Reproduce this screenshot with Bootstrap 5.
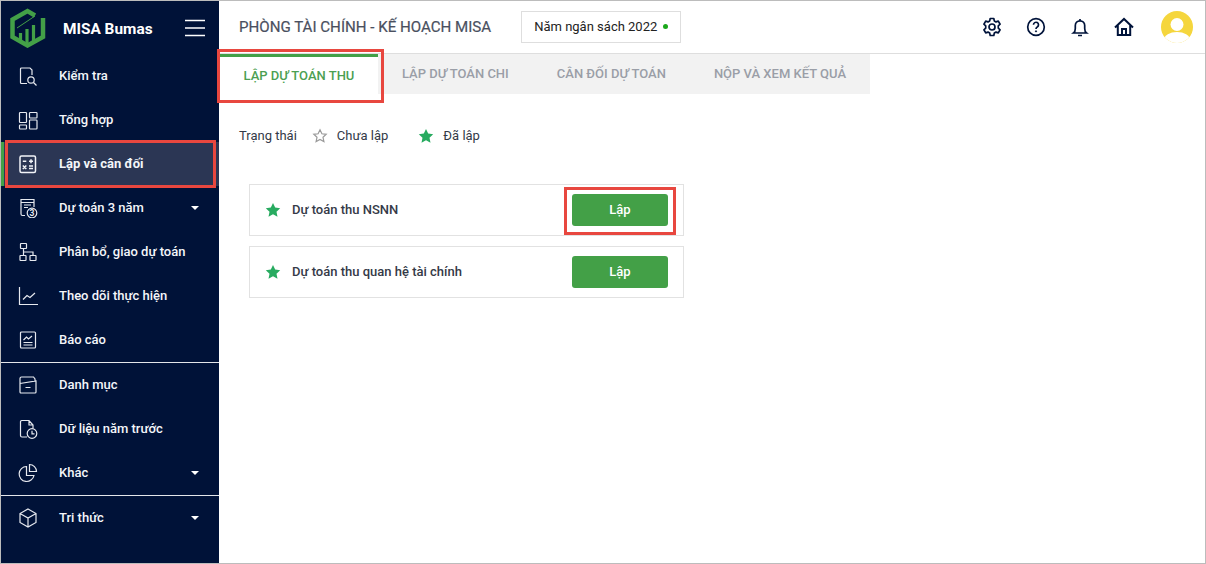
<!DOCTYPE html>
<html lang="vi"><head><meta charset="utf-8"><title>MISA Bumas</title>
<link href="https://cdn.jsdelivr.net/npm/bootstrap@5.3.0/dist/css/bootstrap.min.css" rel="stylesheet">
<style>
html,body{height:100%;margin:0;overflow:hidden}
body{font-family:Roboto,"Liberation Sans",sans-serif;font-size:13px;color:#212b3d;background:#fff}
.app-frame{width:1206px;height:564px;border:1px solid #bcbcbc;position:relative;display:flex;overflow:hidden}
.side-bar{width:218px;flex:none;background:#001238;color:#fff}
.brand-row{height:53px;padding-left:9px;padding-right:14px}
.brand-name{font-weight:700;font-size:15.400px;margin-left:17px;margin-top:5px}
.menu-row{height:44px;padding-left:17px;padding-right:20px;font-size:13px;font-weight:500;color:#f4f6fa}
.menu-row svg.mi{width:20px;height:20px;flex:none;margin-right:21px;fill:none;stroke:#e6e9ef;stroke-width:1.200}
.menu-row.is-on svg.mi{stroke:#f2f4f8;stroke-width:1.500}
.menu-row.is-on{background:#2b3654;border-left:3px solid #43a047;padding-left:14px;font-weight:700}
.menu-sep{height:1px;background:#e4e6ea;margin:0}
.down-caret{margin-left:auto;width:0;height:0;border-left:4.500px solid transparent;border-right:4.500px solid transparent;border-top:4.500px solid #fff}
.main-pane{flex:1;min-width:0}
.top-bar{height:53px;border-bottom:1px solid #dedede;padding-left:20px}
.org-title{font-size:15.100px;color:#4a5060;font-weight:400;-webkit-text-stroke:.2px #4a5060}
.year-box{border:1px solid #dedede;height:32px;width:160px;margin-left:30px;padding-left:12px;font-size:13px;color:#222;margin-top:-1px}
.year-dot{width:5px;height:5px;border-radius:50%;background:#1ba81b;margin-left:6px}
.top-icons{margin-left:auto;padding-right:12px}
.top-icons svg{display:block}
.top-icons .ti{width:22px;height:22px;fill:none;stroke:#00133a;stroke-width:1.700;margin-right:22px}
.top-icons .ti.last-ti{margin-right:26px}
.tab-strip{height:40px;width:651px;background:#f2f2f2}
.tab-item{height:40px;font-size:13px;font-weight:500;color:#9a9ea7;padding:0 24px;white-space:nowrap}
.tab-item.is-on{background:#fff;border-top:3px solid #43a047;color:#4c9f52;width:158px;padding:0;justify-content:center;margin-left:1px}
.status-row{padding:32px 0 0 20px;font-size:13px;height:66px;color:#333a48}
.star{width:16px;height:16px;flex:none}
.status-row .star{margin-top:2px}
.task-box{width:435px;height:52px;border:1px solid #e2e2e2;margin-left:30px;margin-bottom:10px;padding-left:15px;padding-right:15px;font-size:13px;font-weight:500;color:#353a47}
.task-box .star{margin-right:11px}
.lap-btn{width:96px;height:32px;background:#43a047;color:#fff;border:0;border-radius:3px;font-size:13px;font-weight:500;margin-left:auto;padding:0}
.mark-box{position:absolute;border:3px solid #e8473f;pointer-events:none}
</style></head><body>
<div class="app-frame">
<nav class="side-bar d-flex flex-column">
  <div class="brand-row d-flex align-items-center">
    <svg width="36" height="40" viewBox="0 0 36 40" fill="none"><path d="M25 7.500 17.500 3 2.500 11.500V29L17.500 37.500 33 29V10" stroke="#43a047" stroke-width="4.500"/><path d="M10.500 25V33.500M17 21V36M23.500 17V33.500" stroke="#43a047" stroke-width="3.200"/><path d="M7 20 16 14 25 8" stroke="#43a047" stroke-width="1"/></svg>
    <span class="brand-name">MISA Bumas</span>
    <svg class="ms-auto" width="20" height="18" viewBox="0 0 20 18" stroke="#fff" stroke-width="1.600"><path d="M0 1.500H20M0 9H20M0 16.500H20"/></svg>
  </div>
  <div class="menu-row d-flex align-items-center"><svg class="mi" viewBox="0 0 20 20"><path d="M9 17.500H3.500a1 1 0 0 1-1-1V3a1 1 0 0 1 1-1H12l2 2v5"/><circle cx="13" cy="14" r="3.200"/><path d="m15.500 16.500 3 3"/></svg>Kiểm tra</div>
  <div class="menu-row d-flex align-items-center"><svg class="mi" viewBox="0 0 20 20"><rect x="1.500" y="2.500" width="7" height="10" rx=".7"/><rect x="11.500" y="2.500" width="7.500" height="5.500" rx=".7"/><rect x="1.500" y="15" width="7" height="4" rx=".7"/><rect x="11.500" y="10" width="7.500" height="9" rx=".7"/></svg>Tổng hợp</div>
  <div class="menu-row is-on d-flex align-items-center"><svg class="mi" viewBox="0 0 20 20"><rect x="2" y="2" width="15.500" height="16.500" rx="1.500"/><path d="M4.800 7.200h3.500M11 7.200h4M13 5.200v4M4.800 11.500l3.500 3.500M8.300 11.500l-3.500 3.500M11 12h4M11 14.500h4"/></svg>Lập và cân đối</div>
  <div class="menu-row d-flex align-items-center"><svg class="mi" viewBox="0 0 20 20"><path d="M7 17.500H4.500A1.500 1.500 0 0 1 3 16V1.500h13V9"/><path d="M3 4.500h13M6 7h7M6 9.500h4"/><circle cx="14" cy="15" r="4.800"/><text x="14" y="18" text-anchor="middle" font-size="8.500" font-weight="700" fill="#e6e9ef" stroke="none" font-family="Roboto,sans-serif">3</text></svg>Dự toán 3 năm<span class="down-caret"></span></div>
  <div class="menu-row d-flex align-items-center"><svg class="mi" viewBox="0 0 20 20"><rect x="2.500" y="1.500" width="6" height="5" rx=".5"/><rect x="2" y="13.500" width="6" height="5" rx=".5"/><rect x="12" y="13.500" width="6" height="5" rx=".5"/><path d="M5.500 6.500v7M5.500 10H15v3.500"/></svg>Phân bổ, giao dự toán</div>
  <div class="menu-row d-flex align-items-center"><svg class="mi" viewBox="0 0 20 20"><path d="M1.500 1v17.500H20"/><path d="m5 13.500 4-4 3 2 5-4.500"/></svg>Theo dõi thực hiện</div>
  <div class="menu-row d-flex align-items-center"><svg class="mi" viewBox="0 0 20 20"><rect x="2.500" y="2" width="15" height="16" rx="1"/><path d="m5.500 10 3-3 2 2 3.500-3M5.500 12.500h9M5.500 15h9"/></svg>Báo cáo</div>
  <div class="menu-sep"></div>
  <div class="menu-row d-flex align-items-center"><svg class="mi" viewBox="0 0 20 20"><path d="M2 17V3.500A1.500 1.500 0 0 1 3.500 2h12L17 4v2M2 8.500 18 6v11a1 1 0 0 1-1 1H3a1 1 0 0 1-1-1ZM7.500 12.500h5"/></svg>Danh mục</div>
  <div class="menu-row d-flex align-items-center"><svg class="mi" viewBox="0 0 20 20"><path d="M9 18H4a1.500 1.500 0 0 1-1.500-1.500v-14A1.500 1.500 0 0 1 4 1.500h7l4 4.500v3.500M11 1.500V6h4"/><circle cx="14" cy="14.500" r="4.800"/><path d="M14 11.800v3h2.500"/></svg>Dữ liệu năm trước</div>
  <div class="menu-row d-flex align-items-center"><svg class="mi" viewBox="0 0 20 20"><path d="M8.500 3.500a7.500 7.500 0 1 0 7.500 9H8.500Z"/><path d="M11.500 1.500a7 7 0 0 1 7 7h-7Z"/></svg>Khác<span class="down-caret"></span></div>
  <div class="menu-sep"></div>
  <div class="menu-row d-flex align-items-center"><svg class="mi" viewBox="0 0 20 20"><path d="m10 1 8 4.500v9L10 19l-8-4.500v-9ZM2 5.500 10 10l8-4.500M10 10v9"/></svg>Tri thức<span class="down-caret"></span></div>
</nav>
<main class="main-pane d-flex flex-column">
  <header class="top-bar d-flex align-items-center">
    <span class="org-title">PHÒNG TÀI CHÍNH - KẾ HOẠCH MISA</span>
    <div class="year-box d-flex align-items-center">Năm ngân sách 2022<span class="year-dot"></span></div>
    <div class="top-icons d-flex align-items-center">
      <svg class="ti" viewBox="0 0 22 22"><path d="M9.200 2.500h3.600l.5 2.400 1.700 1 2.300-.8 1.800 3.100-1.800 1.600v2.400l1.800 1.600-1.800 3.100-2.300-.8-1.700 1-.5 2.400H9.200l-.5-2.400-1.700-1-2.300.8-1.800-3.100 1.800-1.600V9.800L2.900 8.200l1.800-3.100 2.300.8 1.700-1Z" stroke-linejoin="round"/><circle cx="11" cy="11" r="3"/></svg>
      <svg class="ti" viewBox="0 0 22 22"><circle cx="11" cy="11" r="8.300"/><path d="M8.500 8.800a2.500 2.500 0 1 1 3.800 2.100c-.9.600-1.300 1-1.300 2"/><circle cx="11" cy="15.300" r=".6" fill="#00133a" stroke-width="1"/></svg>
      <svg class="ti" viewBox="0 0 22 22"><path d="M4.500 17h13c-1.300-1-1.800-2.500-1.800-4.500V9.500a4.700 4.700 0 0 0-9.400 0v3c0 2-.5 3.500-1.800 4.500ZM9 19.500h4M11 3v1.800"/></svg>
      <svg class="ti last-ti" viewBox="0 0 22 22"><path d="M2 11.500 11 3l9 8.500M4.800 9.500v9.500h12.400V9.500M9 19v-6h4v6" stroke-width="2"/></svg>
      <svg width="32" height="32" viewBox="0 0 32 32"><defs><clipPath id="avc"><circle cx="16" cy="16" r="16"/></clipPath></defs><circle cx="16" cy="16" r="16" fill="#f5d63d"/><g clip-path="url(#avc)" fill="#fff"><circle cx="16" cy="13.500" r="6.500"/><ellipse cx="16" cy="29" rx="13" ry="8"/></g></svg>
    </div>
  </header>
  <div class="tab-strip d-flex">
    <div class="tab-item is-on d-flex align-items-center">LẬP DỰ TOÁN THU</div>
    <div class="tab-item d-flex align-items-center">LẬP DỰ TOÁN CHI</div>
    <div class="tab-item d-flex align-items-center">CÂN ĐỐI DỰ TOÁN</div>
    <div class="tab-item d-flex align-items-center">NỘP VÀ XEM KẾT QUẢ</div>
  </div>
  <div class="status-row d-flex align-items-start">
    <span>Trạng thái</span>
    <svg class="star" style="margin-left:15px" viewBox="0 0 16 16"><path d="m8 1.800 1.900 4 4.300.5-3.200 3 .9 4.300L8 11.400l-3.900 2.200.9-4.300-3.200-3 4.300-.5Z" fill="none" stroke="#9a9a9a" stroke-width="1.200"/></svg>
    <span style="margin-left:9px">Chưa lập</span>
    <svg class="star" style="margin-left:30px" viewBox="0 0 16 16"><path d="m8 1 2.200 4.600 5 .6-3.700 3.500 1 5L8 12.200l-4.500 2.500 1-5L.8 6.200l5-.6Z" fill="#28ab60"/></svg>
    <span style="margin-left:9px">Đã lập</span>
  </div>
  <div class="task-box mt-4 d-flex align-items-center">
    <svg class="star" viewBox="0 0 16 16"><path d="m8 1 2.200 4.600 5 .6-3.700 3.500 1 5L8 12.200l-4.500 2.500 1-5L.8 6.200l5-.6Z" fill="#28ab60"/></svg>
    <span>Dự toán thu NSNN</span>
    <button type="button" class="btn lap-btn">Lập</button>
  </div>
  <div class="task-box d-flex align-items-center">
    <svg class="star" viewBox="0 0 16 16"><path d="m8 1 2.200 4.600 5 .6-3.700 3.500 1 5L8 12.200l-4.500 2.500 1-5L.8 6.200l5-.6Z" fill="#28ab60"/></svg>
    <span>Dự toán thu quan hệ tài chính</span>
    <button type="button" class="btn lap-btn">Lập</button>
  </div>
</main>
<div class="mark-box" style="left:4px;top:139px;width:211px;height:48px"></div>
<div class="mark-box" style="left:216px;top:48px;width:167px;height:54px"></div>
<div class="mark-box" style="left:563px;top:186px;width:112px;height:48px"></div>
</div>
</body></html>
